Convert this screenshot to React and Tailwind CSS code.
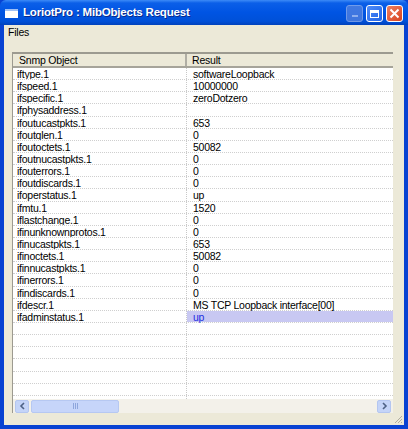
import React from "react";

const rows = [
  ["iftype.1", "softwareLoopback"],
  ["ifspeed.1", "10000000"],
  ["ifspecific.1", "zeroDotzero"],
  ["ifphysaddress.1", ""],
  ["ifoutucastpkts.1", "653"],
  ["ifoutqlen.1", "0"],
  ["ifoutoctets.1", "50082"],
  ["ifoutnucastpkts.1", "0"],
  ["ifouterrors.1", "0"],
  ["ifoutdiscards.1", "0"],
  ["ifoperstatus.1", "up"],
  ["ifmtu.1", "1520"],
  ["iflastchange.1", "0"],
  ["ifinunknownprotos.1", "0"],
  ["ifinucastpkts.1", "653"],
  ["ifinoctets.1", "50082"],
  ["ifinnucastpkts.1", "0"],
  ["ifinerrors.1", "0"],
  ["ifindiscards.1", "0"],
  ["ifdescr.1", "MS TCP Loopback interface[00]"],
  ["ifadminstatus.1", "up"],
];

const empty = Array.from({ length: 8 });

export default function App() {
  return (
    <div
      className="w-[408px] h-[429px] flex flex-col bg-[#0842D2] overflow-hidden"
      style={{ fontFamily: '"Liberation Sans", Arial, sans-serif' }}
    >
      {/* Title bar */}
      <div className="h-[25px] shrink-0 flex items-center bg-[linear-gradient(#3d8bf7_0%,#0b5fe8_12%,#0054e3_50%,#0050d8_85%,#0142bc_100%)] rounded-t-[6px] pl-[5px] pr-[5px]">
        <div className="w-[13px] h-[9px] bg-white border-t-2 border-[#9fc0f5] mt-[1px]" />
        <span className="ml-[5px] text-white text-[11.5px] font-bold tracking-[-0.2px] [text-shadow:1px_1px_0_#0a2a8a]">
          LoriotPro : MibObjects Request
        </span>
        <div className="flex-1" />
        <div className="flex gap-[3px] mt-[2px]">
          <div className="w-[17px] h-[17px] rounded-[3px] border border-[#9db6ec] bg-[#5a86e0] opacity-70 flex items-end justify-center pb-[4px]">
            <div className="w-[6px] h-[2px] bg-[#c9d6f5]" />
          </div>
          <div className="w-[17px] h-[17px] rounded-[3px] border border-white bg-[linear-gradient(135deg,#4f8cf8,#2265e8)] flex items-center justify-center">
            <div className="w-[9px] h-[8px] border border-white border-t-[3px]" />
          </div>
          <div className="w-[17px] h-[17px] rounded-[3px] border border-white bg-[linear-gradient(135deg,#ee8060,#d8431f)] flex items-center justify-center">
            <svg width="11" height="11" viewBox="0 0 11 11">
              <path d="M1.5 1.5 L9.5 9.5 M9.5 1.5 L1.5 9.5" stroke="white" strokeWidth="2" />
            </svg>
          </div>
        </div>
      </div>

      {/* Body */}
      <div className="flex-1 min-h-0 flex flex-col border-x-4 border-b-4 border-[#0842D2] bg-[#ECE9D8]">
        {/* Menu */}
        <div className="h-[16px] shrink-0 flex items-center pl-[4px] text-[10.5px] tracking-[-0.2px] text-black">
          Files
        </div>
        <div className="flex-1 min-h-0 flex flex-col pl-[8px] pr-[11px] pt-[11px] pb-[12px] relative">
          <div className="flex-1 min-h-0 flex flex-col border-l border-[#9c9a90] border-t-2 border-t-[#9c9a90] bg-white">
            {/* Header */}
            <div className="h-[14px] shrink-0 flex border-b-2 border-[#a6a49a] bg-[#ECE9D8] text-[10.5px] tracking-[-0.2px] text-black leading-[13px]">
              <div className="w-[174px] shrink-0 pl-[6px] border-r-2 border-[#b0aea4]">Snmp Object</div>
              <div className="flex-1 pl-[5px]">Result</div>
            </div>
            {/* Rows */}
            <div className="flex-1 min-h-0 flex flex-col overflow-hidden">
              {rows.map(([a, b], i) => {
                const sel = i === rows.length - 1;
                return (
                  <div key={i} className="h-[12.15px] shrink-0 flex text-[10.5px] tracking-[-0.25px] leading-[12.5px] text-black border-b border-dotted border-[#cfcfcf]">
                    <div className="w-[174px] shrink-0 pl-[4px] border-r border-dotted border-[#c8c8c8] whitespace-nowrap overflow-hidden">{a}</div>
                    <div className={"flex-1 pl-[6px] whitespace-nowrap " + (sel ? "bg-[#c8c8f2] text-[#1c2ee0]" : "")}>{b}</div>
                  </div>
                );
              })}
              {empty.map((_, i) => (
                <div key={"e" + i} className="h-[12.15px] shrink-0 flex border-b border-dotted border-[#cfcfcf]">
                  <div className="w-[174px] shrink-0 border-r border-dotted border-[#c8c8c8]" />
                  <div className="flex-1" />
                </div>
              ))}
            </div>
            {/* Scrollbar */}
            <div className="h-[14px] shrink-0 flex items-center bg-[#f3f1ea] px-[2px]">
              <div className="w-[14px] h-[13px] rounded-[2px] bg-[#c4d4f8] border border-[#b4c6f0] flex items-center justify-center">
                <svg width="7" height="8" viewBox="0 0 7 8">
                  <path d="M5 1 L2 4 L5 7" stroke="#4d6185" strokeWidth="1.6" fill="none" />
                </svg>
              </div>
              <div className="ml-[2px] w-[88px] h-[13px] rounded-[2px] bg-[#c6d5fa] border border-[#b6c8f2] flex items-center justify-center gap-[1px]">
                <div className="w-[1px] h-[6px] bg-[#8ea6dc]" />
                <div className="w-[1px] h-[6px] bg-[#8ea6dc]" />
                <div className="w-[1px] h-[6px] bg-[#8ea6dc]" />
              </div>
              <div className="flex-1" />
              <div className="w-[14px] h-[13px] rounded-[2px] bg-[#c4d4f8] border border-[#b4c6f0] flex items-center justify-center">
                <svg width="7" height="8" viewBox="0 0 7 8">
                  <path d="M2 1 L5 4 L2 7" stroke="#4d6185" strokeWidth="1.6" fill="none" />
                </svg>
              </div>
            </div>
          </div>
          {/* resize grip */}
          <svg className="absolute right-[1px] bottom-[1px]" width="10" height="10" viewBox="0 0 10 10">
            <path d="M9 2 L2 9 M9 5 L5 9 M9 8 L8 9" stroke="#b0ad9f" strokeWidth="1" />
          </svg>
        </div>
      </div>
    </div>
  );
}
